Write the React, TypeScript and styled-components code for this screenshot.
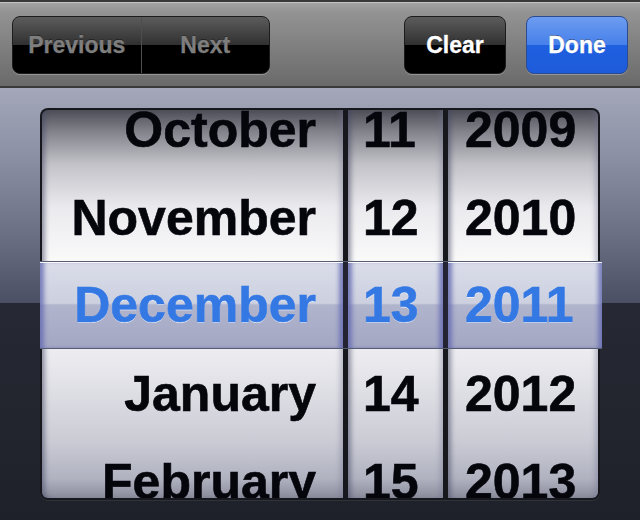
import styled, { createGlobalStyle } from 'styled-components'

const GlobalStyle = createGlobalStyle`
  html, body {
    margin: 0;
    padding: 0;
  }
  body {
    background: #1f212a;
    font-family: "Liberation Sans", Arial, sans-serif;
  }
`

const Screen = styled.div`
  width: 640px;
  height: 520px;
  display: flex;
  flex-direction: column;
  overflow: hidden;
`

const Toolbar = styled.header`
  flex: none;
  height: 88px;
  display: flex;
  align-items: flex-start;
  padding: 14px 12px 0;
  box-sizing: border-box;
  border-top: 2px solid #383838;
  border-bottom: 2px solid #3a3a3a;
  background: linear-gradient(#a4a4a4, #939393 12%, #7c7c7c 60%, #6a6a6a);
  box-shadow: inset 0 1px 0 rgba(255, 255, 255, 0.35);
`

const Spacer = styled.div`
  flex: 1;
`

const Segmented = styled.div`
  display: flex;
  width: 258px;
  height: 58px;
  box-sizing: border-box;
  border: 1px solid #1c1c1c;
  border-radius: 8px;
  overflow: hidden;
  box-shadow: 0 1px 0 rgba(255, 255, 255, 0.25);
  background: linear-gradient(#5c5c5c, #303030 50%, #000 50%, #000);
`

const Segment = styled.div`
  flex: 1;
  display: flex;
  align-items: center;
  justify-content: center;
  font-size: 23px;
  font-weight: bold;
  color: #7e7e7e;
  -webkit-text-stroke: 0.3px currentColor;
  text-shadow: 0 -1px 0 rgba(0, 0, 0, 0.6);
  & + & {
    border-left: 1px solid #4e4e4e;
  }
`

const Button = styled.div<{ $primary?: boolean }>`
  width: 102px;
  height: 58px;
  box-sizing: border-box;
  display: flex;
  align-items: center;
  justify-content: center;
  border-radius: 8px;
  border: 1px solid ${(p) => (p.$primary ? '#2b4b92' : '#1c1c1c')};
  background: ${(p) =>
    p.$primary
      ? 'linear-gradient(#6d9cf0, #4680ea 50%, #1f60e0 50%, #1d5bda)'
      : 'linear-gradient(#5c5c5c, #303030 50%, #000 50%, #000)'};
  box-shadow: 0 1px 0 rgba(255, 255, 255, 0.25);
  font-size: 23px;
  font-weight: bold;
  color: #fff;
  -webkit-text-stroke: 0.3px currentColor;
  text-shadow: 0 -1px 0 rgba(0, 0, 0, 0.45);
  & + & {
    margin-left: 20px;
  }
`

const PickerArea = styled.section`
  flex: 1;
  position: relative;
  padding: 20px 40px;
  background: linear-gradient(
    #a3a7b9 0,
    #8f93a7 60px,
    #6a6e83 150px,
    #4b4f63 215px,
    #262833 215px,
    #1f212a 100%
  );
`

const Frame = styled.div`
  width: 560px;
  height: 392px;
  box-sizing: border-box;
  padding: 2px;
  display: flex;
  gap: 5px;
  border-radius: 8px;
  overflow: hidden;
  background: #17171e;
  box-shadow: 0 1px 0 rgba(255, 255, 255, 0.08);
`

const Wheel = styled.div<{ $width: number }>`
  width: ${(p) => p.$width}px;
  flex: none;
  overflow: hidden;
  background: linear-gradient(
    #4e4e58 0,
    #86868f 6%,
    #c2c2c8 14%,
    #eaeaee 25%,
    #fbfbfb 40%,
    #f6f6f8 55%,
    #e2e2e8 70%,
    #cbccd5 85%,
    #b0b2c0 95%,
    #8a8c9c 100%
  );
  box-shadow: inset 6px 0 5px -3px rgba(70, 72, 100, 0.55),
    inset -6px 0 5px -3px rgba(110, 112, 140, 0.4);
  &:first-child {
    border-radius: 6px 0 0 6px;
  }
  &:last-child {
    border-radius: 0 6px 6px 0;
  }
`

const List = styled.div`
  margin-top: -24px;
`

const Item = styled.div<{ $align: 'left' | 'right'; $pad: number }>`
  height: 88px;
  line-height: 88px;
  font-size: 50px;
  font-weight: bold;
  color: #05050c;
  -webkit-text-stroke: 0.6px currentColor;
  white-space: nowrap;
  text-align: ${(p) => p.$align};
  ${(p) => (p.$align === 'right' ? `padding-right: ${p.$pad}px;` : `padding-left: ${p.$pad}px;`)}
`

const Band = styled.div`
  position: absolute;
  top: 173px;
  left: 40px;
  width: 562px;
  height: 86px;
  display: flex;
  gap: 5px;
  border-top: 1px solid #585c70;
  border-bottom: 1px solid #585c70;
  background: rgba(38, 38, 56, 0.85);
`

const BandCell = styled.div<{ $width: number; $align: 'left' | 'right'; $pad: number }>`
  width: ${(p) => p.$width}px;
  flex: none;
  line-height: 86px;
  font-size: 50px;
  font-weight: bold;
  color: #3478e4;
  -webkit-text-stroke: 0.6px currentColor;
  white-space: nowrap;
  text-shadow: 0 1px 0 rgba(255, 255, 255, 0.75);
  text-align: ${(p) => p.$align};
  ${(p) => (p.$align === 'right' ? `padding-right: ${p.$pad}px;` : `padding-left: ${p.$pad}px;`)}
  box-sizing: border-box;
  background: linear-gradient(#dadde9 0, #ccd0df 48%, #b0b4cc 50%, #a3a7c3 100%);
  box-shadow: inset 0 1px 0 rgba(255, 255, 255, 0.9),
    inset 6px 0 4px -2px rgba(100, 106, 178, 0.8),
    inset -6px 0 4px -2px rgba(100, 106, 178, 0.8);
`

const months = ['October', 'November', 'December', 'January', 'February']
const days = ['11', '12', '13', '14', '15']
const years = ['2009', '2010', '2011', '2012', '2013']

const App = () => {
  return (
    <Screen>
      <GlobalStyle />
      <Toolbar>
        <Segmented>
          <Segment>Previous</Segment>
          <Segment>Next</Segment>
        </Segmented>
        <Spacer />
        <Button>Clear</Button>
        <Button $primary>Done</Button>
      </Toolbar>
      <PickerArea>
        <Frame>
          <Wheel $width={301}>
            <List>
              {months.map((m) => (
                <Item key={m} $align="right" $pad={27}>
                  {m}
                </Item>
              ))}
            </List>
          </Wheel>
          <Wheel $width={95}>
            <List>
              {days.map((d) => (
                <Item key={d} $align="left" $pad={15}>
                  {d}
                </Item>
              ))}
            </List>
          </Wheel>
          <Wheel $width={150}>
            <List>
              {years.map((y) => (
                <Item key={y} $align="left" $pad={17}>
                  {y}
                </Item>
              ))}
            </List>
          </Wheel>
        </Frame>
        <Band>
          <BandCell $width={303} $align="right" $pad={27}>
            December
          </BandCell>
          <BandCell $width={95} $align="left" $pad={15}>
            13
          </BandCell>
          <BandCell $width={154} $align="left" $pad={17}>
            2011
          </BandCell>
        </Band>
      </PickerArea>
    </Screen>
  )
}

export default App
